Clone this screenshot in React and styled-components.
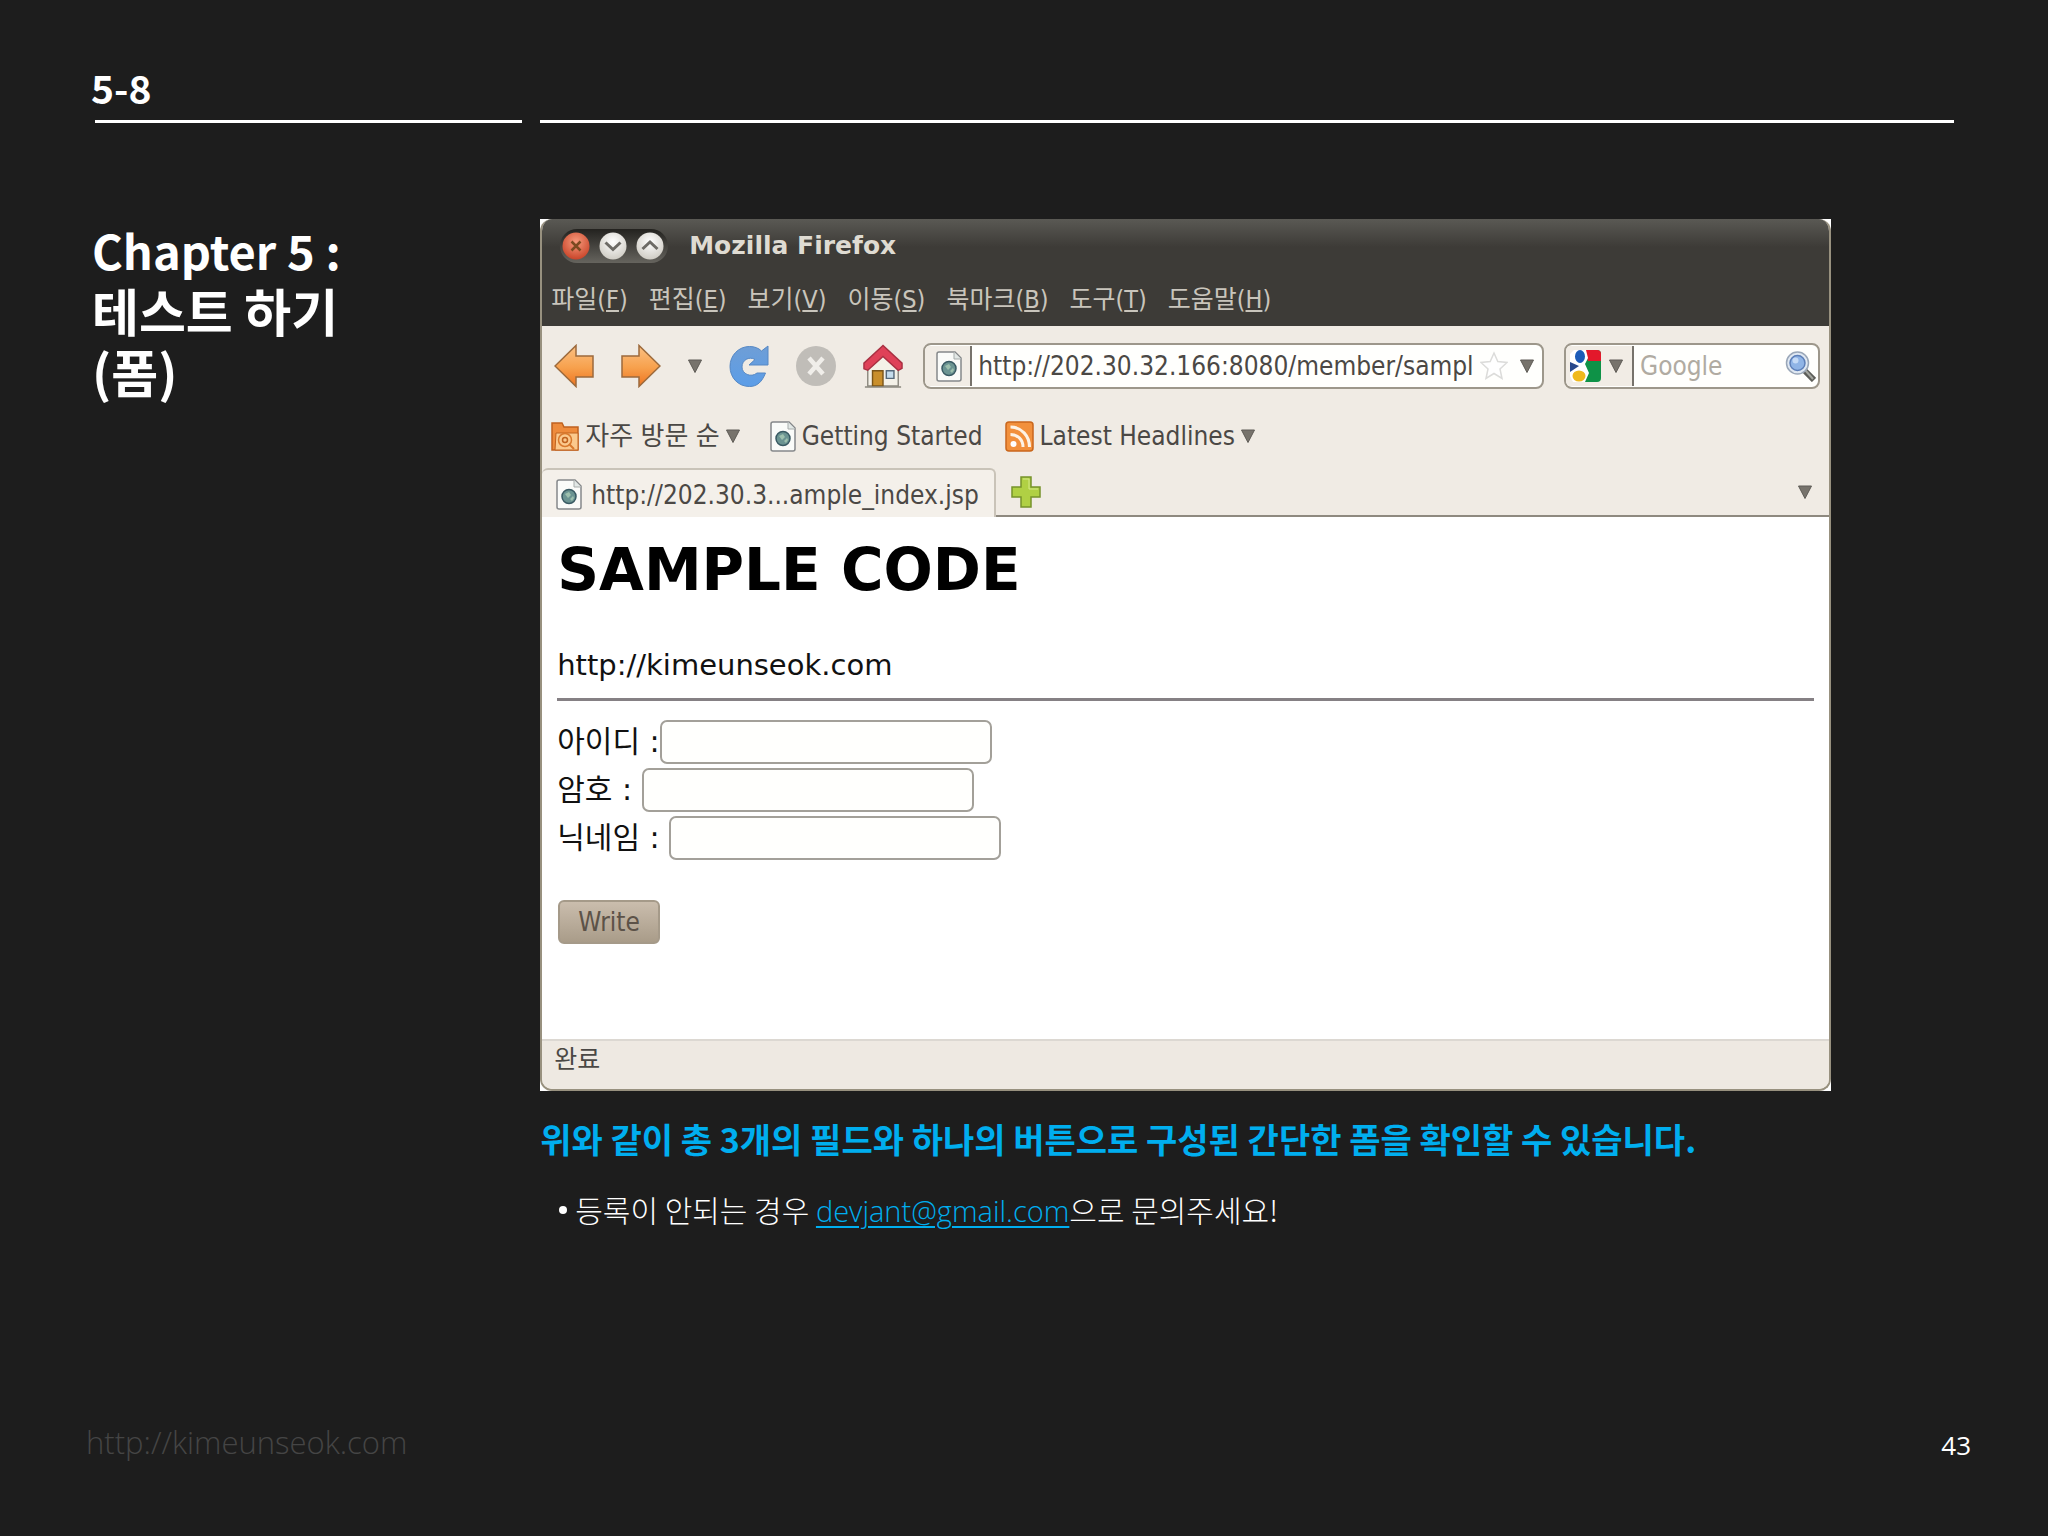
import React from 'react';
import styled, { createGlobalStyle } from 'styled-components';

const GlobalStyle = createGlobalStyle`
  * {
    box-sizing: border-box;
  }
  body {
    margin: 0;
    background: #1d1d1d;
  }
  button, input {
    font: inherit;
    color: inherit;
  }
`;

const Slide = styled.div`
  display: flex;
  flex-direction: column;
  min-height: 100vh;
  background: #1d1d1d;
  color: #fff;
  font-family: 'Noto Sans CJK KR', sans-serif;
`;
const Header = styled.header`
  display: grid;
  grid-template-columns: 427fr 1413fr;
  column-gap: 18px;
  padding: 60px 94px 0 95px;
`;
const HeaderCell = styled.div`
  height: 63px;
  border-bottom: 3px solid #fff;
`;
const PageCode = styled.div`
  margin-left: -4px;
  font-size: 39px;
  font-weight: 700;
  line-height: 54px;
`;
const Content = styled.main`
  display: grid;
  grid-template-columns: 427fr 1413fr;
  column-gap: 18px;
  flex: 1;
  padding: 96px 94px 0 95px;
`;
const Chapter = styled.h1`
  margin: 0 0 0 -3px;
  font-size: 51px;
  font-weight: 700;
  line-height: 61px;
`;
const ChapterNumber = styled.span`
  display: block;
  font-size: 47px;
`;
const Body = styled.div`
  min-width: 0;
  padding-right: 123px;
`;

const Backdrop = styled.div`
  background: #fff;
`;
const Browser = styled.section`
  overflow: hidden;
  border: 2px solid #98917f;
  border-top: 0;
  border-radius: 12px;
  background: #f0ebe4;
  color: #4b4845;
  font-family: 'DejaVu Sans Condensed', 'Noto Sans CJK KR', sans-serif;
  font-size: 26px;
  line-height: 32px;
`;
const Chrome = styled.div`
  background: linear-gradient(#5a5954, #3d3b37 28px);
  color: #dfdbd2;
`;
const TitleBar = styled.div`
  display: flex;
  align-items: center;
  gap: 21px;
  height: 54px;
  padding: 0 18px;
  font-family: 'DejaVu Sans', sans-serif;
  font-size: 25px;
  font-weight: 700;
`;
const WindowButtons = styled.div`
  display: flex;
  align-items: center;
  gap: 9px;
  height: 34px;
  padding: 0 4px 0 2px;
  border-radius: 17px;
  background: linear-gradient(#23221f, #66645e);
`;
const IconButton = styled.button`
  display: flex;
  flex: none;
  align-items: center;
  justify-content: center;
  padding: 0;
  border: 0;
  background: none;
`;
const MenuBar = styled.nav`
  display: flex;
  align-items: center;
  gap: 21px;
  height: 53px;
  padding: 0 9px;
  font-size: 25px;
`;
const MenuItem = styled.button`
  padding: 0;
  border: 0;
  background: none;
  color: #c9c5bc;
`;
const NavBar = styled.div`
  display: flex;
  align-items: center;
  gap: 20px;
  height: 80px;
  padding: 0 9px 0 12px;
`;
const NavButtons = styled.div`
  display: flex;
  align-items: center;
  gap: 27px;
`;
const Field = styled.div`
  display: flex;
  align-items: center;
  flex: ${props => (props.$fixed ? 'none' : '1')};
  width: ${props => (props.$fixed ? '256px' : 'auto')};
  min-width: 0;
  height: 46px;
  overflow: hidden;
  border: 2px solid #9d978b;
  border-radius: 8px;
  background: #fffffd;
`;
const FieldLead = styled.div`
  display: flex;
  align-items: center;
  gap: 8px;
  align-self: stretch;
  margin: 1px 0;
  padding: ${props => (props.$wide ? '0 9px 0 4px' : '0 8px 0 11px')};
  border-right: 2px solid #77736c;
  background: #f1ece5;
`;
const FieldInput = styled.input`
  flex: 1;
  min-width: 0;
  margin: 0 0 0 6px;
  padding: 0;
  border: 0;
  outline: 0;
  background: none;
  &::placeholder {
    color: #b0aba2;
    opacity: 1;
  }
`;
const FieldTail = styled.div`
  display: flex;
  align-items: center;
  gap: 12px;
  padding: ${props => (props.$tight ? '0 2px 0 0' : '0 8px')};
`;
const Bookmarks = styled.div`
  display: flex;
  align-items: center;
  gap: 22px;
  height: 60px;
  padding: 0 9px;
`;
const Bookmark = styled.button`
  display: flex;
  align-items: center;
  gap: 6px;
  padding: ${props => (props.$menu ? '0 8px 0 0' : '0')};
  border: 0;
  background: none;
`;
const TabBar = styled.div`
  display: flex;
  align-items: stretch;
  height: 49px;
  margin-top: 2px;
`;
const Tab = styled.button`
  display: flex;
  align-items: center;
  gap: 9px;
  padding: 2px 15px 0 14px;
  border: 2px solid #c9c3b8;
  border-left-width: 0;
  border-bottom: 0;
  border-radius: 6px 6px 0 0;
  background: #f4f0ea;
`;
const TabRest = styled.div`
  display: flex;
  flex: 1;
  align-items: center;
  justify-content: space-between;
  padding: 0 17px 0 15px;
  border-bottom: 2px solid #8e897f;
`;
const Viewport = styled.div`
  min-height: 522px;
  padding: 13px 15px;
  background: #fff;
  color: #111;
  font-family: 'DejaVu Sans', 'Noto Sans CJK KR', sans-serif;
  font-size: 29px;
  line-height: 48px;
`;
const SampleTitle = styled.h2`
  margin: 0;
  color: #000;
  font-size: 58px;
  line-height: 80px;
`;
const SampleUrl = styled.p`
  margin: 31px 0 0;
`;
const Rule = styled.hr`
  margin: 9px 0 17px;
  border: 0;
  border-top: 3px solid #858084;
`;
const FormRow = styled.div`
  display: flex;
  align-items: center;
  height: 48px;
`;
const Label = styled.label`
  font-size: 30px;
  white-space: pre;
`;
const TextInput = styled.input`
  width: 332px;
  height: 44px;
  padding: 0 8px;
  border: 2px solid #a3a099;
  border-radius: 7px;
  background: #fffffd;
`;
const SubmitButton = styled.button`
  display: block;
  height: 44px;
  margin: 38px 0 0 1px;
  padding: 0 18px;
  border: 2px solid #a59a89;
  border-radius: 6px;
  background: linear-gradient(#cabdad, #a99c89);
  color: #5c5248;
  font-family: 'DejaVu Sans Condensed', sans-serif;
  font-size: 26px;
  line-height: 32px;
`;
const StatusBar = styled.footer`
  height: 50px;
  padding: 3px 12px;
  border-top: 2px solid #dcd8d2;
  background: #eee9e2;
  font-size: 25px;
`;

const Caption = styled.h3`
  margin: 23px 0 0;
  color: #00aeef;
  font-size: 34px;
  font-weight: 700;
  line-height: 50px;
`;
const Notes = styled.ul`
  margin: 20px 0 0;
  padding: 0 0 0 19px;
  list-style: none;
`;
const Note = styled.li`
  display: flex;
  align-items: baseline;
  font-size: 30px;
  font-weight: 300;
  line-height: 50px;
  white-space: pre;
  &::before {
    content: '';
    align-self: center;
    width: 8px;
    height: 8px;
    margin-right: 8px;
    border-radius: 50%;
    background: #fff;
  }
`;
const MailLink = styled.a`
  color: #00aeef;
  font-family: 'Open Sans', 'Noto Sans', sans-serif;
  font-size: 29px;
  text-decoration-thickness: 2px;
  text-underline-offset: 4px;
`;
const Footer = styled.footer`
  display: flex;
  align-items: flex-start;
  justify-content: space-between;
  padding: 0 77px 66px 86px;
  font-family: 'Open Sans', 'Noto Sans', sans-serif;
  font-weight: 300;
`;
const SiteName = styled.span`
  color: #454545;
  font-size: 31px;
  line-height: 44px;
`;
const PageNumber = styled.span`
  font-size: 26px;
  font-weight: 400;
  line-height: 50px;
`;

const MENUS = [
  ['파일', 'F'],
  ['편집', 'E'],
  ['보기', 'V'],
  ['이동', 'S'],
  ['북마크', 'B'],
  ['도구', 'T'],
  ['도움말', 'H'],
];

const FIELDS = [
  { id: 'userid', label: '아이디 :', type: 'text' },
  { id: 'password', label: '암호 : ', type: 'password' },
  { id: 'nickname', label: '닉네임 : ', type: 'text' },
];

const Triangle = () => (
  <svg width="14" height="14" viewBox="0 0 14 14">
    <path d="M0.5 1h13L7 13.5z" fill="#77736c" stroke="#5e5b56" strokeWidth="1" />
  </svg>
);

const WindowDot = ({ kind }) => (
  <svg width="28" height="28" viewBox="0 0 28 28">
    <defs>
      <radialGradient id={`dot-${kind}`} cx="50%" cy="35%" r="65%">
        <stop offset="0" stopColor={kind === 'close' ? '#f79a7c' : '#ffffff'} />
        <stop offset="1" stopColor={kind === 'close' ? '#c9452a' : '#cfccc4'} />
      </radialGradient>
    </defs>
    <circle cx="14" cy="14" r="13.5" fill={`url(#dot-${kind})`} />
    {kind === 'close' && <path d="M9.5 9.5l9 9M18.5 9.5l-9 9" stroke="#7c4a20" strokeWidth="2.5" />}
    {kind === 'min' && <path d="M6.5 10.5l7.5 7 7.5-7" fill="none" stroke="#6d6b66" strokeWidth="3" />}
    {kind === 'max' && <path d="M6.5 17l7.5-7 7.5 7" fill="none" stroke="#6d6b66" strokeWidth="3" />}
  </svg>
);

const Arrow = ({ forward }) => (
  <svg width="40" height="44" viewBox="0 0 40 44">
    <defs>
      <linearGradient id="arrow" x1="0" y1="0" x2="0" y2="1">
        <stop offset="0" stopColor="#fbc183" />
        <stop offset="0.55" stopColor="#f7a04c" />
        <stop offset="1" stopColor="#ee7420" />
      </linearGradient>
    </defs>
    <path
      d={forward ? 'M1 12h17V1.5L39 22 18 42.5V33H1z' : 'M39 12H22V1.5L1 22l21 20.5V33h17z'}
      fill="url(#arrow)"
      stroke="#9c6a3c"
      strokeWidth="1.5"
    />
  </svg>
);

const Reload = () => (
  <svg width="40" height="44" viewBox="0 0 40 44">
    <defs>
      <linearGradient id="reload" x1="0" y1="0" x2="0" y2="1">
        <stop offset="0" stopColor="#6f9ed6" />
        <stop offset="1" stopColor="#5b9de8" />
      </linearGradient>
    </defs>
    <path
      d="M39 2v19H20l6-5.5C20 12 13 16 13 23c0 7 9 11 15 6h8.5C33 38 28 42.5 20.5 42.5 9 42.5 1 33.5 1 22.5S9.5 2.5 20.5 2.5c5 0 9 1.5 12 4.5z"
      fill="url(#reload)"
      stroke="#5688c4"
      strokeWidth="1"
    />
  </svg>
);

const Stop = () => (
  <svg width="40" height="44" viewBox="0 0 40 44">
    <circle cx="20" cy="22" r="20" fill="#c0bdb8" />
    <path d="M13 14l14 16M27 14L13 30" stroke="#f0eeea" strokeWidth="4.5" />
  </svg>
);

const Home = () => (
  <svg width="40" height="46" viewBox="0 0 42 46">
    <path d="M5 22L21 9l16 14v21H5z" fill="#f4f1e8" stroke="#8b887f" strokeWidth="1.5" />
    <path d="M21 1.5L1 20v6l4 1.5L21 13l16 14.5 4-2V20z" fill="#df4158" stroke="#a93042" strokeWidth="1.5" />
    <path d="M10 44V28h11v16z" fill="#c98f2c" stroke="#7b5518" strokeWidth="1.5" />
    <path d="M24.5 28h8v8h-8z" fill="#c5dcec" stroke="#56697a" strokeWidth="1.5" />
    <path d="M2 45h38" stroke="#8b887f" strokeWidth="1.5" />
  </svg>
);

const PageIcon = () => (
  <svg width="26" height="31" viewBox="0 0 26 31">
    <path d="M3 1h16l6 6v21a2 2 0 0 1-2 2H3a2 2 0 0 1-2-2V3a2 2 0 0 1 2-2z" fill="#fafbf9" stroke="#85888a" strokeWidth="1.5" />
    <path d="M18 1v7h7" fill="#e2e8e6" stroke="#a7acab" strokeWidth="1" />
    <circle cx="13" cy="17.5" r="7" fill="#6b9492" stroke="#395a63" strokeWidth="1.5" />
    <path d="M9 15l4-2 2 3-3 3zM14 20l3-3 1 2-2 3z" fill="#9dc0ae" />
  </svg>
);

const FolderIcon = () => (
  <svg width="28" height="30" viewBox="0 0 28 30">
    <path d="M1 29V2h10l2 4h14v23z" fill="#ee8b3c" stroke="#c0621f" strokeWidth="1.5" />
    <path d="M4 29l1-17h22v17z" fill="#fbc98d" stroke="#c0621f" strokeWidth="1" />
    <circle cx="14" cy="19" r="6.5" fill="none" stroke="#d9792d" strokeWidth="1.5" />
    <circle cx="14" cy="19" r="2.5" fill="none" stroke="#c0621f" strokeWidth="1.5" />
    <path d="M18 23l5 5" stroke="#d9792d" strokeWidth="2" />
  </svg>
);

const RssIcon = () => (
  <svg width="29" height="31" viewBox="0 0 29 31">
    <rect x="1" y="1" width="27" height="29" rx="3" fill="#f2903c" stroke="#c9661c" strokeWidth="1.5" />
    <circle cx="8.5" cy="23" r="3" fill="#fff" />
    <path d="M5.5 13.5c7 0 12.5 5 12.5 12.5M5.5 6c11 0 19 9 19 20" fill="none" stroke="#fdf3e6" strokeWidth="3" />
  </svg>
);

const PlusIcon = () => (
  <svg width="30" height="32" viewBox="0 0 30 32">
    <path d="M10 1h10v10h9v10h-9v10H10V21H1V11h9z" fill="#b0d044" stroke="#75932a" strokeWidth="1.5" />
    <path d="M12 3h6v10h9" fill="none" stroke="#d4e888" strokeWidth="1" />
  </svg>
);

const StarIcon = () => (
  <svg width="28" height="30" viewBox="0 0 28 30">
    <path d="M14 2l3.8 8.5 9.2 1-7 6.5 2 9.5-8-5-8 5 2-9.5-7-6.5 9.2-1z" fill="#fff" stroke="#dcdcda" strokeWidth="1.5" />
  </svg>
);

const GoogleIcon = () => (
  <svg width="31" height="32" viewBox="0 0 31 32">
    <path d="M12 0h15a4 4 0 0 1 4 4v24a4 4 0 0 1-4 4H12z" fill="#0e9247" />
    <path d="M15 0h12a4 4 0 0 1 4 4v7H18z" fill="#e3182b" />
    <path d="M4 0h12l2 8-3 6 4 9-4 9H3l-3-6V4z" fill="#fff" />
    <ellipse cx="10" cy="6.5" rx="5" ry="6.5" fill="#1c5bb8" />
    <path d="M0 12l9 4-9 6z" fill="#27488c" />
    <ellipse cx="9" cy="26" rx="6.5" ry="5.5" fill="#f0b91c" />
  </svg>
);

const SearchIcon = () => (
  <svg width="31" height="32" viewBox="0 0 31 32">
    <path d="M19 20l10 10" stroke="#5c5d58" strokeWidth="6" />
    <path d="M20 20l8 9" stroke="#a4a69f" strokeWidth="2" />
    <circle cx="12.5" cy="13" r="11" fill="#dfe8f2" stroke="#9aa7b8" strokeWidth="1.5" />
    <circle cx="12.5" cy="13" r="7.5" fill="#8fb4e6" stroke="#5d7fb8" strokeWidth="1.5" />
    <circle cx="10.5" cy="10.5" r="3" fill="#c4daf6" />
  </svg>
);

const BrowserChrome = () => (
  <>
    <Chrome>
      <TitleBar>
        <WindowButtons>
          <IconButton aria-label="닫기"><WindowDot kind="close" /></IconButton>
          <IconButton aria-label="최소화"><WindowDot kind="min" /></IconButton>
          <IconButton aria-label="최대화"><WindowDot kind="max" /></IconButton>
        </WindowButtons>
        <span>Mozilla Firefox</span>
      </TitleBar>
      <MenuBar>
        {MENUS.map(([name, key]) => (
          <MenuItem key={key}>{name}(<u>{key}</u>)</MenuItem>
        ))}
      </MenuBar>
    </Chrome>
    <NavBar>
      <NavButtons>
        <IconButton aria-label="뒤로"><Arrow /></IconButton>
        <IconButton aria-label="앞으로"><Arrow forward /></IconButton>
        <IconButton aria-label="방문 기록"><Triangle /></IconButton>
        <IconButton aria-label="새로 고침"><Reload /></IconButton>
        <IconButton aria-label="중지"><Stop /></IconButton>
        <IconButton aria-label="홈"><Home /></IconButton>
      </NavButtons>
      <Field>
        <FieldLead><PageIcon /></FieldLead>
        <FieldInput aria-label="주소" defaultValue="http://202.30.32.166:8080/member/sample_index.jsp" />
        <FieldTail>
          <IconButton aria-label="북마크 추가"><StarIcon /></IconButton>
          <IconButton aria-label="주소 목록"><Triangle /></IconButton>
        </FieldTail>
      </Field>
      <Field $fixed>
        <FieldLead $wide>
          <GoogleIcon />
          <Triangle />
        </FieldLead>
        <FieldInput aria-label="검색" placeholder="Google" />
        <FieldTail $tight>
          <IconButton aria-label="찾기"><SearchIcon /></IconButton>
        </FieldTail>
      </Field>
    </NavBar>
    <Bookmarks>
      <Bookmark $menu><FolderIcon />자주 방문 순<Triangle /></Bookmark>
      <Bookmark><PageIcon />Getting Started</Bookmark>
      <Bookmark $menu><RssIcon />Latest Headlines<Triangle /></Bookmark>
    </Bookmarks>
    <TabBar>
      <Tab><PageIcon />http://202.30.3...ample_index.jsp</Tab>
      <TabRest>
        <IconButton aria-label="새 탭"><PlusIcon /></IconButton>
        <IconButton aria-label="탭 목록"><Triangle /></IconButton>
      </TabRest>
    </TabBar>
  </>
);

const SamplePage = () => (
  <Viewport>
    <SampleTitle>SAMPLE CODE</SampleTitle>
    <SampleUrl>http://kimeunseok.com</SampleUrl>
    <Rule />
    <form onSubmit={e => e.preventDefault()}>
      {FIELDS.map(field => (
        <FormRow key={field.id}>
          <Label htmlFor={field.id}>{field.label}</Label>
          <TextInput id={field.id} type={field.type} />
        </FormRow>
      ))}
      <SubmitButton type="submit">Write</SubmitButton>
    </form>
  </Viewport>
);

const App = () => (
  <Slide>
    <GlobalStyle />
    <Header>
      <HeaderCell><PageCode>5-8</PageCode></HeaderCell>
      <HeaderCell />
    </Header>
    <Content>
      <Chapter>
        <ChapterNumber>Chapter 5 :</ChapterNumber>
        테스트 하기<br />(폼)
      </Chapter>
      <Body>
        <Backdrop>
          <Browser>
            <BrowserChrome />
            <SamplePage />
            <StatusBar>완료</StatusBar>
          </Browser>
        </Backdrop>
        <Caption>위와 같이 총 3개의 필드와 하나의 버튼으로 구성된 간단한 폼을 확인할 수 있습니다.</Caption>
        <Notes>
          <Note>
            <span>등록이 안되는 경우 <MailLink href="mailto:devjant@gmail.com">devjant@gmail.com</MailLink>으로 문의주세요!</span>
          </Note>
        </Notes>
      </Body>
    </Content>
    <Footer>
      <SiteName>http://kimeunseok.com</SiteName>
      <PageNumber>43</PageNumber>
    </Footer>
  </Slide>
);

export default App;
